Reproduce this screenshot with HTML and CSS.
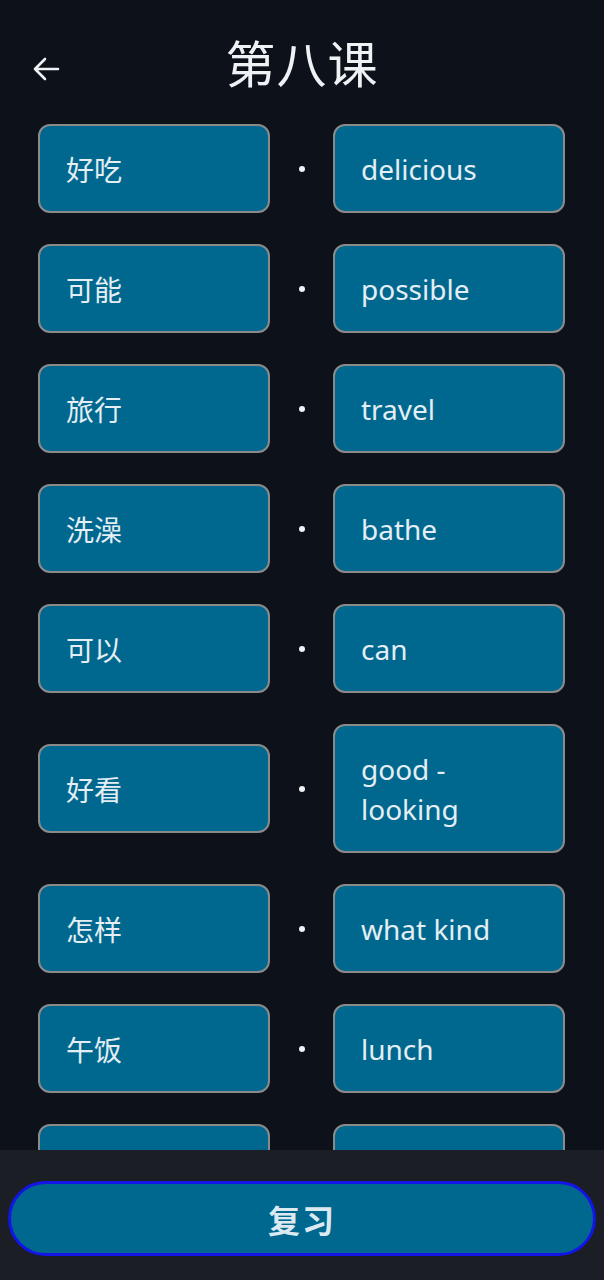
FILE: index.html
```html
<!DOCTYPE html>
<html lang="zh">
<head>
<meta charset="utf-8">
<title>第八课</title>
<link rel="stylesheet" href="styles.css">
</head>
<body>
<header class="header">
  <button class="back" aria-label="返回">
    <svg width="28" height="28" viewBox="0 0 28 28" fill="none" stroke="#eef2f5" stroke-width="2.6" stroke-linecap="round" stroke-linejoin="round">
      <path d="M26 14H3M13 4L3 14l10 10"/>
    </svg>
  </button>
  <h1 class="title">第八课</h1>
</header>
<main class="list">
  <div class="row"><div class="card">好吃</div><span class="dot"></span><div class="card en">delicious</div></div>
  <div class="row"><div class="card">可能</div><span class="dot"></span><div class="card en">possible</div></div>
  <div class="row"><div class="card">旅行</div><span class="dot"></span><div class="card en">travel</div></div>
  <div class="row"><div class="card">洗澡</div><span class="dot"></span><div class="card en">bathe</div></div>
  <div class="row"><div class="card">可以</div><span class="dot"></span><div class="card en">can</div></div>
  <div class="row"><div class="card">好看</div><span class="dot"></span><div class="card en">good - looking</div></div>
  <div class="row"><div class="card">怎样</div><span class="dot"></span><div class="card en">what kind</div></div>
  <div class="row"><div class="card">午饭</div><span class="dot"></span><div class="card en">lunch</div></div>
  <div class="row"><div class="card">早饭</div><span class="dot"></span><div class="card en">breakfast</div></div>
</main>
<footer class="bottom">
  <button class="review">复习</button>
</footer>
</body>
</html>
```
FILE: styles.css
```css
* { box-sizing: border-box; }
html, body {
  margin: 0;
  padding: 0;
  background: #0d121a;
  height: 1280px;
  overflow: hidden;
}
body {
  font-family: "Noto Sans", "Noto Sans CJK SC", sans-serif;
  color: #e4eef4;
}
.header {
  height: 124px;
  display: flex;
  align-items: center;
  justify-content: center;
  position: relative;
  padding-bottom: 2px;
}
.back {
  position: absolute;
  left: 31px;
  top: 54px;
  background: none;
  border: 0;
  padding: 0;
  width: 30px;
  height: 30px;
  display: flex;
  align-items: center;
  justify-content: center;
}
.title {
  margin: 0;
  font-family: "Noto Sans CJK SC", sans-serif;
  font-weight: 400;
  font-size: 50px;
  line-height: 1;
  letter-spacing: 1px;
  color: #eef2f5;
}
.list {
  display: flex;
  flex-direction: column;
  gap: 31px;
  padding: 0 39px 0 38px;
}
.row {
  display: grid;
  grid-template-columns: 1fr 63px 1fr;
  align-items: center;
}
.card {
  background: #00688e;
  border: 2px solid #8a8a8a;
  border-radius: 12px;
  padding: 22.5px 24px 22.5px 26px;
  font-family: "Noto Sans CJK SC", sans-serif;
  font-size: 28px;
  line-height: 40px;
  color: #e4eef4;
}
.card.en {
  font-family: "Noto Sans", "Noto Sans CJK SC", sans-serif;
  padding-right: 40px;
}
.dot {
  justify-self: center;
  width: 6px;
  height: 6px;
  border-radius: 50%;
  background: #eef2f5;
}
.bottom {
  position: fixed;
  left: 0;
  right: 0;
  bottom: 0;
  height: 130px;
  background: #1b1e24;
  padding: 31px 8px 24px 8px;
}
.review {
  width: 100%;
  height: 75px;
  border: 3px solid #1414e6;
  border-radius: 38px;
  background: #00688e;
  color: #dde9f0;
  font-family: "Noto Sans CJK SC", sans-serif;
  font-weight: 700;
  font-size: 32px;
  letter-spacing: 2px;
  padding: 0;
}
```
